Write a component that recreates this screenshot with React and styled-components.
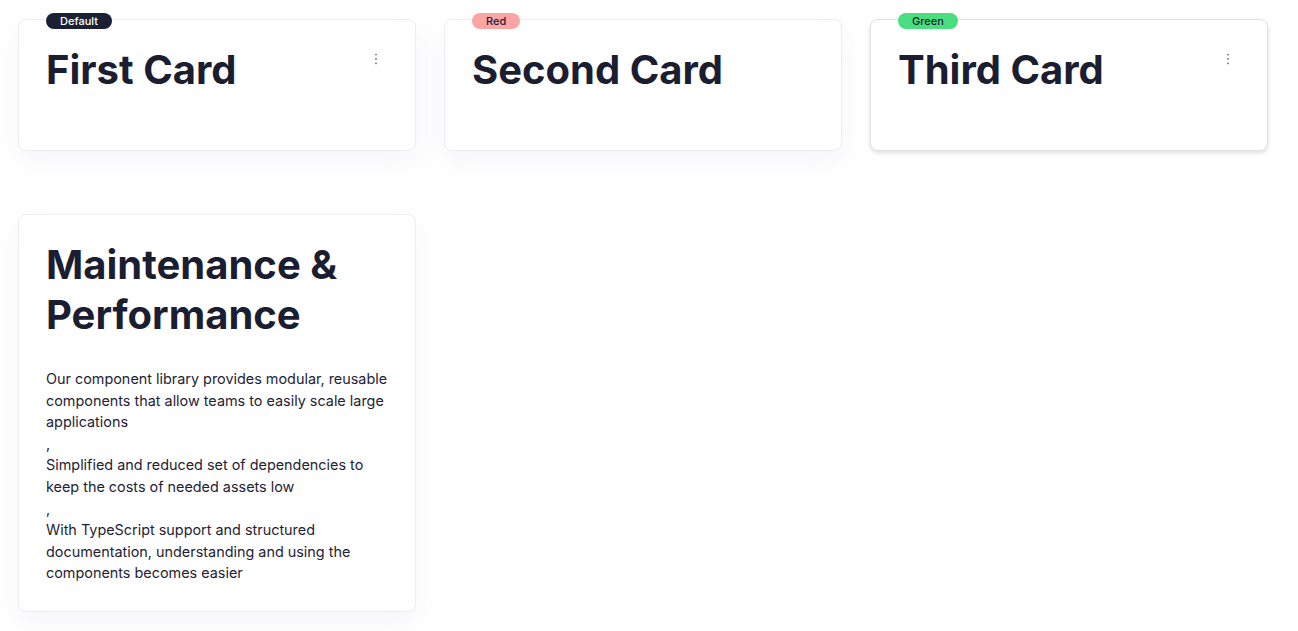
import React from 'react';
import styled, { createGlobalStyle, css } from 'styled-components';

const GlobalStyle = createGlobalStyle`
  * { box-sizing: border-box; }
  body {
    margin: 0;
    background: #fff;
    font-family: Inter, 'Noto Sans', sans-serif;
    color: #1b1e30;
  }
`;

const badgeColors = {
  default: { bg: '#1c2033', fg: '#fff' },
  red: { bg: '#fca5a5', fg: '#1b1e30' },
  green: { bg: '#4ade80', fg: '#1b1e30' },
};

const cards = [
  { title: 'First Card', badge: 'Default', tone: 'default', menu: true },
  { title: 'Second Card', badge: 'Red', tone: 'red' },
  { title: 'Third Card', badge: 'Green', tone: 'green', menu: true, raised: true },
  {
    title: 'Maintenance & Performance',
    items: [
      'Our component library provides modular, reusable components that allow teams to easily scale large applications',
      'Simplified and reduced set of dependencies to keep the costs of needed assets low',
      'With TypeScript support and structured documentation, understanding and using the components becomes easier',
    ],
  },
];

const DotsIcon = () => (
  <svg width="14" height="14" viewBox="0 0 14 14" fill="#6b7080">
    <circle cx="7" cy="2.6" r="0.9" />
    <circle cx="7" cy="7" r="0.9" />
    <circle cx="7" cy="11.4" r="0.9" />
  </svg>
);

const App = () => {
  return (
    <>
      <GlobalStyle />
      <Grid>
        {cards.map((c) => (
          <Card key={c.title} $raised={c.raised}>
            {c.badge && <Badge $tone={c.tone}>{c.badge}</Badge>}
            <Header>
              <Title>{c.title}</Title>
              {c.menu && (
                <MenuButton aria-label="More">
                  <DotsIcon />
                </MenuButton>
              )}
            </Header>
            {c.items && (
              <Description>
                {c.items.map((t, i) => (
                  <React.Fragment key={i}>
                    {i > 0 && <Comma>,</Comma>}
                    <Line>{t}</Line>
                  </React.Fragment>
                ))}
              </Description>
            )}
          </Card>
        ))}
      </Grid>
    </>
  );
};

const Grid = styled.div`
  display: grid;
  grid-template-columns: repeat(3, 398px);
  column-gap: 28px;
  row-gap: 63px;
  align-items: start;
  padding: 19px 18px;
`;

const Card = styled.div`
  position: relative;
  background: #fff;
  border: 1px solid #ececf1;
  border-radius: 8px;
  padding: 25px 27px 27px 27px;
  box-shadow: 0 10px 28px rgba(110, 120, 170, 0.07);
  ${(p) =>
    p.$raised &&
    css`
      border-color: #e2e2e6;
      box-shadow: 0 2px 4px rgba(0, 0, 0, 0.13);
    `}
`;

const Badge = styled.span`
  position: absolute;
  top: -7px;
  left: 27px;
  height: 16px;
  padding: 0 14px;
  border-radius: 999px;
  display: flex;
  align-items: center;
  font-size: 11px;
  font-weight: 500;
  line-height: 1;
  background: ${(p) => badgeColors[p.$tone].bg};
  color: ${(p) => badgeColors[p.$tone].fg};
`;

const Header = styled.div`
  display: flex;
  justify-content: space-between;
  align-items: flex-start;
  margin-bottom: 28px;
`;

const Title = styled.h2`
  margin: 0;
  font-size: 40px;
  line-height: 50px;
  font-weight: 700;
  color: #1b1e30;
`;

const MenuButton = styled.button`
  flex: none;
  width: 24px;
  height: 24px;
  margin-top: 2px;
  padding: 0;
  border: none;
  background: none;
  display: flex;
  align-items: center;
  justify-content: center;
  cursor: pointer;
`;

const Description = styled.div`
  font-size: 14.4px;
  line-height: 21.6px;
  color: #1f2336;
`;

const Line = styled.div``;

const Comma = styled.div``;

export default App;
